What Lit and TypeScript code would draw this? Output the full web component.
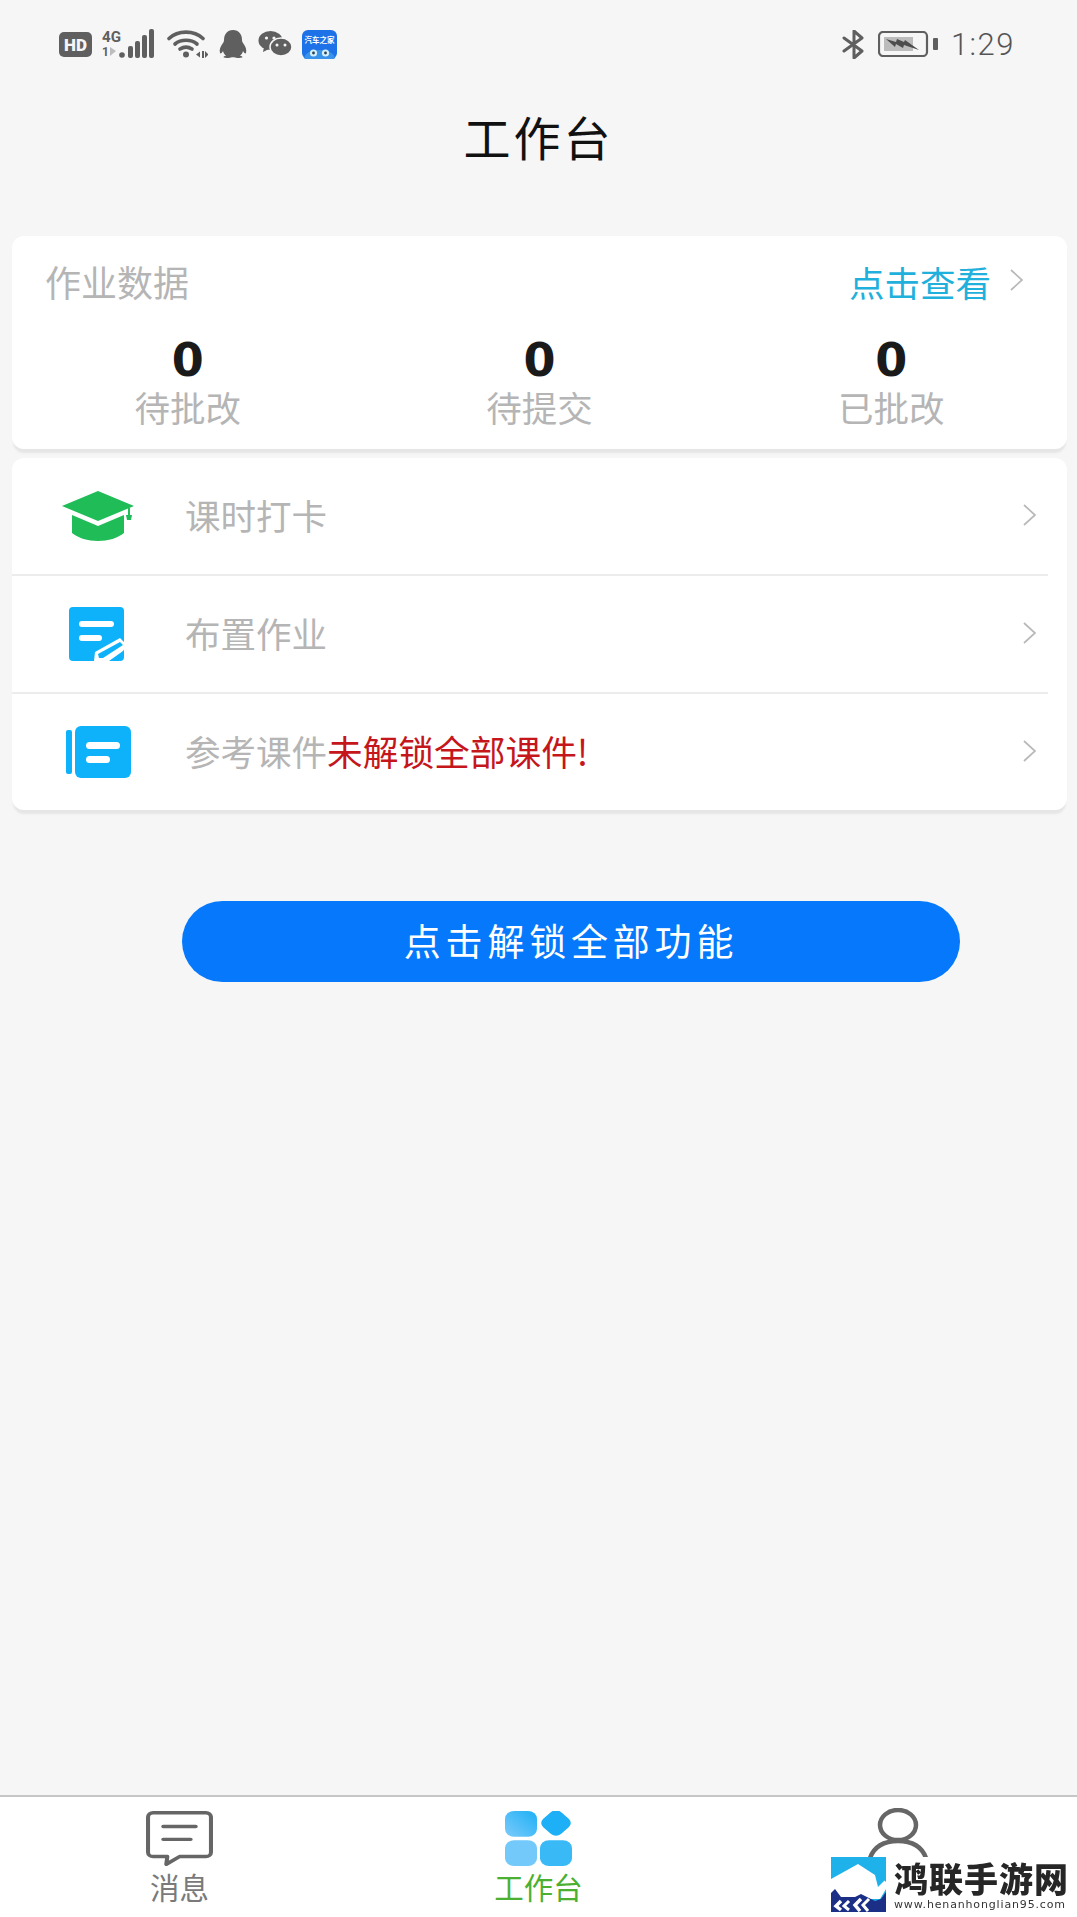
import { LitElement, css, html } from "lit";
import { customElement } from "lit/decorators.js";

const chevron = (w = 15, h = 24) => html`<svg class="chev" width=${w} height=${h} viewBox="0 0 15 24" fill="none">
  <path d="M2 2l11 10L2 22" stroke="#b9b9b9" stroke-width="1.7" />
</svg>`;

const hd = html`<svg width="33" height="25" viewBox="0 0 33 25">
  <rect width="33" height="25" rx="5" fill="#5f5f5f" />
  <text x="16.5" y="18.500" text-anchor="middle" font-family="Roboto, sans-serif" font-weight="900" font-size="17" fill="#f6f6f6">HD</text>
</svg>`;

const signal = html`<svg width="55" height="30" viewBox="0 0 55 30" fill="#5f5f5f">
  <text x="0" y="13" font-family="Roboto, sans-serif" font-weight="700" font-size="15" textLength="19" lengthAdjust="spacingAndGlyphs">4G</text>
  <text x="0" y="27" font-family="Roboto, sans-serif" font-weight="700" font-size="12">1</text>
  <path d="M8 18l6 4-6 5z" fill="#bdbdbd" />
  <circle cx="20" cy="26" r="2.800" />
  <rect x="26" y="17" width="5" height="12" rx="2" />
  <rect x="33" y="12" width="5" height="17" rx="2" />
  <rect x="40" y="6" width="5" height="23" rx="2" />
  <rect x="47" y="0" width="5" height="29" rx="2" />
</svg>`;

const wifi = html`<svg width="41" height="28" viewBox="0 0 41 28" fill="none" stroke="#5f5f5f" stroke-width="3.600" stroke-linecap="round">
  <path d="M2 8.500C11 0 27 0 36 8.500" />
  <path d="M8 14c6-5 16-5 22 0" />
  <path d="M13 19c4-2.500 8-2.500 12 0" />
  <circle cx="19" cy="24.500" r="3" fill="#5f5f5f" stroke="none" />
  <path d="M29 24.500l4-3v6zM35 21h2v7h-2zM38 21l3.500 3.500-3.500 3.500z" fill="#5f5f5f" stroke="none" />
</svg>`;

const qq = html`<svg width="30" height="28" viewBox="0 0 30 28" fill="#5f5f5f">
  <path d="M15 0c6 0 9 4.500 9 10 0 1 .2 2 1 3 2.500 3 4 7 3 10-.5 1-2 0-3-2-.5 2-1.500 3.500-3 4.500 1.500.5 2.500 1.200 2.500 1.800 0 .5-3 .7-5 .7-2 0-3-.7-4.500-.7s-2.500.7-4.500.7c-2 0-5-.2-5-.7 0-.6 1-1.300 2.500-1.800-1.500-1-2.500-2.500-3-4.500-1 2-2.500 3-3 2-1-3 .5-7 3-10 .8-1 1-2 1-3C6 4.500 9 0 15 0z" />
</svg>`;

const wechat = html`<svg width="34" height="26" viewBox="0 0 34 26">
  <ellipse cx="12.500" cy="9.500" rx="12" ry="9.500" fill="#5f5f5f" />
  <path d="M6 16l-1 5 6-3z" fill="#5f5f5f" />
  <ellipse cx="23" cy="16" rx="11" ry="9" fill="#5f5f5f" stroke="#f6f6f6" stroke-width="1.500" />
  <circle cx="8.500" cy="7" r="1.600" fill="#f6f6f6" />
  <circle cx="16" cy="7" r="1.600" fill="#f6f6f6" />
  <circle cx="19" cy="14" r="1.500" fill="#f6f6f6" />
  <circle cx="27" cy="14" r="1.500" fill="#f6f6f6" />
</svg>`;

const carApp = html`<svg width="35" height="29" viewBox="0 0 35 29">
  <rect width="35" height="29" rx="6" fill="#1c72e6" />
  <text x="17.500" y="13" text-anchor="middle" font-family="'Noto Sans CJK SC', sans-serif" font-weight="700" font-size="7.500" fill="#fff">汽车之家</text>
  <ellipse cx="17.500" cy="28" rx="15" ry="8" fill="#3a93ea" />
  <circle cx="11.500" cy="23" r="3.600" fill="#d6effb" />
  <circle cx="23.500" cy="23" r="3.600" fill="#d6effb" />
  <circle cx="11.500" cy="23" r="1.400" fill="#245" />
  <circle cx="23.500" cy="23" r="1.400" fill="#245" />
</svg>`;

const bluetooth = html`<svg width="23" height="29" viewBox="0 0 23 29" fill="none" stroke="#5f5f5f" stroke-width="3" stroke-linejoin="round" stroke-linecap="round">
  <path d="M2 8l18 13-8 7V1l8 7L2 21" />
</svg>`;

const battery = html`<svg width="60" height="26" viewBox="0 0 60 26">
  <rect x="1" y="1" width="48" height="24" rx="4" fill="none" stroke="#5f5f5f" stroke-width="2.200" />
  <rect x="6" y="6" width="29" height="14" fill="#bcbcbc" />
  <path d="M8 8l10 3 1-3 7 3 1-2 14 10-15-5-1 3-7-4-1 3z" fill="#4d4d4d" />
  <rect x="55" y="7" width="5" height="12" rx="1" fill="#5f5f5f" />
</svg>`;

const capIcon = html`<svg width="73" height="50" viewBox="0 0 73 50">
  <path d="M36 0L72 15 36 30 0 15z" fill="#1fbc57" />
  <path d="M10 24l26 11 26-11v18c-6 5-16 8-26 8s-20-3-26-8z" fill="#1fbc57" />
  <path d="M67 17v8" stroke="#1fbc57" stroke-width="2" />
  <path d="M64 24h6l-1 5h-4z" fill="#1fbc57" />
</svg>`;

const docIcon = html`<svg width="60" height="54" viewBox="0 0 60 54">
  <rect width="55" height="54" rx="4" fill="#0db2fb" />
  <rect x="10" y="14" width="35" height="6" rx="3" fill="#fff" />
  <rect x="10" y="28" width="23" height="6" rx="3" fill="#fff" />
  <path d="M25 54l1-9 25-14 7 7-4 6-4 10H33z" fill="#fff" />
  <path d="M30 51l-1-4 22-12 3 3-20 13zM40 54l14-10v6l-4 4z" fill="#0db2fb" />
</svg>`;

const bookIcon = html`<svg width="65" height="52" viewBox="0 0 65 52">
  <rect x="0" y="4" width="6" height="44" rx="2" fill="#0db2fb" />
  <rect x="9" y="0" width="56" height="52" rx="6" fill="#0db2fb" />
  <rect x="20" y="16" width="34" height="7" rx="3.500" fill="#fff" />
  <rect x="20" y="30" width="24" height="7" rx="3.500" fill="#fff" />
</svg>`;

const msgIcon = html`<svg width="67" height="55" viewBox="0 0 66 64" preserveAspectRatio="none" fill="none" stroke="#666" stroke-width="4" stroke-linecap="round" stroke-linejoin="round">
  <path d="M7 2h52a5 5 0 0 1 5 5v41a5 5 0 0 1-5 5H33L20 62l1-9H7a5 5 0 0 1-5-5V7a5 5 0 0 1 5-5z" />
  <path d="M17 18h32M17 33h27" />
</svg>`;

const gridIcon = html`<svg width="67" height="55" viewBox="0 0 67 64" preserveAspectRatio="none">
  <defs>
    <linearGradient id="tile" x1="0" y1="1" x2="1" y2="0">
      <stop offset="0" stop-color="#7ccbfa" />
      <stop offset="1" stop-color="#1db0f6" />
    </linearGradient>
  </defs>
  <rect x="0" y="0" width="32" height="30" rx="9" fill="url(#tile)" />
  <rect x="38.500" y="1.500" width="25" height="25" rx="7" fill="#1db0f6" transform="rotate(45 51 14)" />
  <rect x="0" y="34" width="32" height="30" rx="9" fill="#72c9fa" />
  <rect x="35" y="34" width="32" height="30" rx="9" fill="#3ab9f7" />
</svg>`;

const userIcon = html`<svg class="user" width="60" height="64" viewBox="0 0 60 64" fill="none" stroke="#666" stroke-width="4.500">
  <ellipse cx="30" cy="17" rx="18" ry="15" />
  <path d="M2 50c4-11 14-17 28-17s24 6 28 17" />
</svg>`;

const stats = [
  { n: 0, label: "待批改" },
  { n: 0, label: "待提交" },
  { n: 0, label: "已批改" },
];

@customElement("watermark-badge")
class WatermarkBadge extends LitElement {
  static styles = css`
    :host {
      position: fixed;
      left: 831px;
      top: 1857px;
      width: 246px;
      height: 60px;
      display: flex;
      gap: 8px;
      background: #fff;
    }
    svg {
      flex: none;
    }
    .name {
      font: 900 34px/40px "Noto Sans CJK SC", sans-serif;
      color: #262626;
      letter-spacing: 1px;
      margin-top: 1px;
    }
    .url {
      font: 11px/14px "DejaVu Sans", sans-serif;
      color: #333;
      letter-spacing: 0.85px;
      white-space: nowrap;
    }
  `;

  render() {
    return html`<svg width="55" height="55" viewBox="0 0 55 55">
        <rect width="55" height="55" fill="#1eb1ea" />
        <path d="M0 22L27 7 44 18 47 30 55 22V32L49 42H0z" fill="#fff" />
        <path d="M46 14l1 7 4 4 1-7zM52 14l3 6v5l-3-3z" fill="#1eb1ea" />
        <path d="M0 36L4 32 10 40H24L30 37 44 44 50 42 55 35V55H0z" fill="#1a2f85" />
        <path d="M10 44l-5 5 5 4M30 42l-6 6 5 6" fill="none" stroke="#fff" stroke-width="3.500" />
        <path d="M18 44l-5 5 5 4M38 42l-6 6 5 6" fill="none" stroke="#fff" stroke-width="3" />
      </svg>
      <div>
        <div class="name">鸿联手游网</div>
        <div class="url">www.henanhonglian95.com</div>
      </div>`;
  }
}

@customElement("app-root")
class AppRoot extends LitElement {
  static styles = css`
    :host {
      display: flex;
      flex-direction: column;
      height: 1917px;
      background: #f6f6f6;
      font-family: "Noto Sans CJK SC", sans-serif;
      overflow: hidden;
    }
    .status {
      height: 88px;
      flex: none;
      display: flex;
      align-items: center;
      padding: 0 62px 0 59px;
    }
    .status-left,
    .status-right {
      display: flex;
      align-items: center;
    }
    .status-left {
      gap: 10px;
      flex: 1;
    }
    .status-right {
      gap: 13px;
    }
    .time {
      font: 300 31px/1 Roboto, sans-serif;
      letter-spacing: 1.5px;
      color: #555;
    }
    .title {
      height: 94px;
      flex: none;
      display: flex;
      align-items: center;
      justify-content: center;
      font-size: 47px;
      letter-spacing: 3px;
      color: #111;
    }
    main {
      flex: 1;
      padding: 54px 10px 0 12px;
    }
    .card {
      background: #fff;
      border-radius: 12px;
      box-shadow: 0 5px 2px -1px #e6e6e6;
    }
    .data {
      height: 213px;
      box-sizing: border-box;
      padding: 20px 0 0;
      margin-bottom: 9px;
    }
    .data-head {
      display: flex;
      align-items: center;
      justify-content: space-between;
      padding: 0 43px 0 33px;
      height: 50px;
      font-size: 36px;
      color: #b5b5b5;
    }
    .link {
      display: flex;
      align-items: center;
      gap: 18px;
      color: #1fb0dc;
      font-size: 35.5px;
    }
    .stats {
      display: grid;
      grid-template-columns: repeat(3, 1fr);
      text-align: center;
    }
    .num {
      font: 700 46px/48px "DejaVu Sans", sans-serif;
      color: #1a1a1a;
      margin-top: 30px;
    }
    .label {
      font-size: 35.5px;
      line-height: 46px;
      color: #b5b5b5;
    }
    .row {
      height: 116px;
      display: flex;
      align-items: center;
      margin-right: 19px;
      padding-right: 11px;
      font-size: 35.5px;
      color: #b5b5b5;
    }
    .row + .row {
      border-top: 2px solid #ececec;
    }
    .row-icon {
      width: 173px;
      flex: none;
      display: flex;
      justify-content: center;
    }
    .row-text {
      flex: 1;
      padding-bottom: 4px;
    }
    .chev {
      margin-bottom: 2px;
    }
    .warn {
      color: #c5161b;
      font-size: 35.7px;
    }
    .action {
      display: flex;
      justify-content: center;
      margin-top: 91px;
    }
    .unlock {
      width: 778px;
      height: 81px;
      border: none;
      border-radius: 41px;
      background: #0578fb;
      color: #fff;
      font: 37px "Noto Sans CJK SC", sans-serif;
      letter-spacing: 4.8px;
      padding: 0 0 3px;
      margin-left: 63px;
    }
    nav {
      height: 120px;
      flex: none;
      display: grid;
      grid-template-columns: repeat(3, 1fr);
      background: #fff;
      border-top: 2px solid #c6c6c6;
    }
    .tab {
      display: flex;
      flex-direction: column;
      align-items: center;
      padding-top: 14px;
      font-size: 29.5px;
      line-height: 36px;
      color: #7a7a7a;
    }
    .tab.active {
      color: #4bb032;
    }
    .tab svg {
      margin-bottom: 2px;
    }
    .tab .user {
      margin-top: -3px;
    }
  `;

  render() {
    const rows = [
      { icon: capIcon, text: html`课时打卡` },
      { icon: docIcon, text: html`布置作业` },
      {
        icon: bookIcon,
        text: html`参考课件<span class="warn">未解锁全部课件!</span>`,
      },
    ];
    return html`
      <div class="status">
        <div class="status-left">${hd}${signal}${wifi}${qq}${wechat}${carApp}</div>
        <div class="status-right">${bluetooth}${battery}<span class="time">1:29</span></div>
      </div>
      <div class="title">工作台</div>
      <main>
        <section class="card data">
          <div class="data-head">
            <span>作业数据</span>
            <span class="link">点击查看 ${chevron()}</span>
          </div>
          <div class="stats">
            ${stats.map(
              (s) => html`<div>
                <div class="num">${s.n}</div>
                <div class="label">${s.label}</div>
              </div>`,
            )}
          </div>
        </section>
        <section class="card rows">
          ${rows.map(
            (r) => html`<div class="row">
              <div class="row-icon">${r.icon}</div>
              <div class="row-text">${r.text}</div>
              ${chevron()}
            </div>`,
          )}
        </section>
        <div class="action"><button class="unlock">点击解锁全部功能</button></div>
      </main>
      <nav>
        <div class="tab">${msgIcon}<span>消息</span></div>
        <div class="tab active">${gridIcon}<span>工作台</span></div>
        <div class="tab">${userIcon}</div>
      </nav>
      <watermark-badge></watermark-badge>
    `;
  }
}
